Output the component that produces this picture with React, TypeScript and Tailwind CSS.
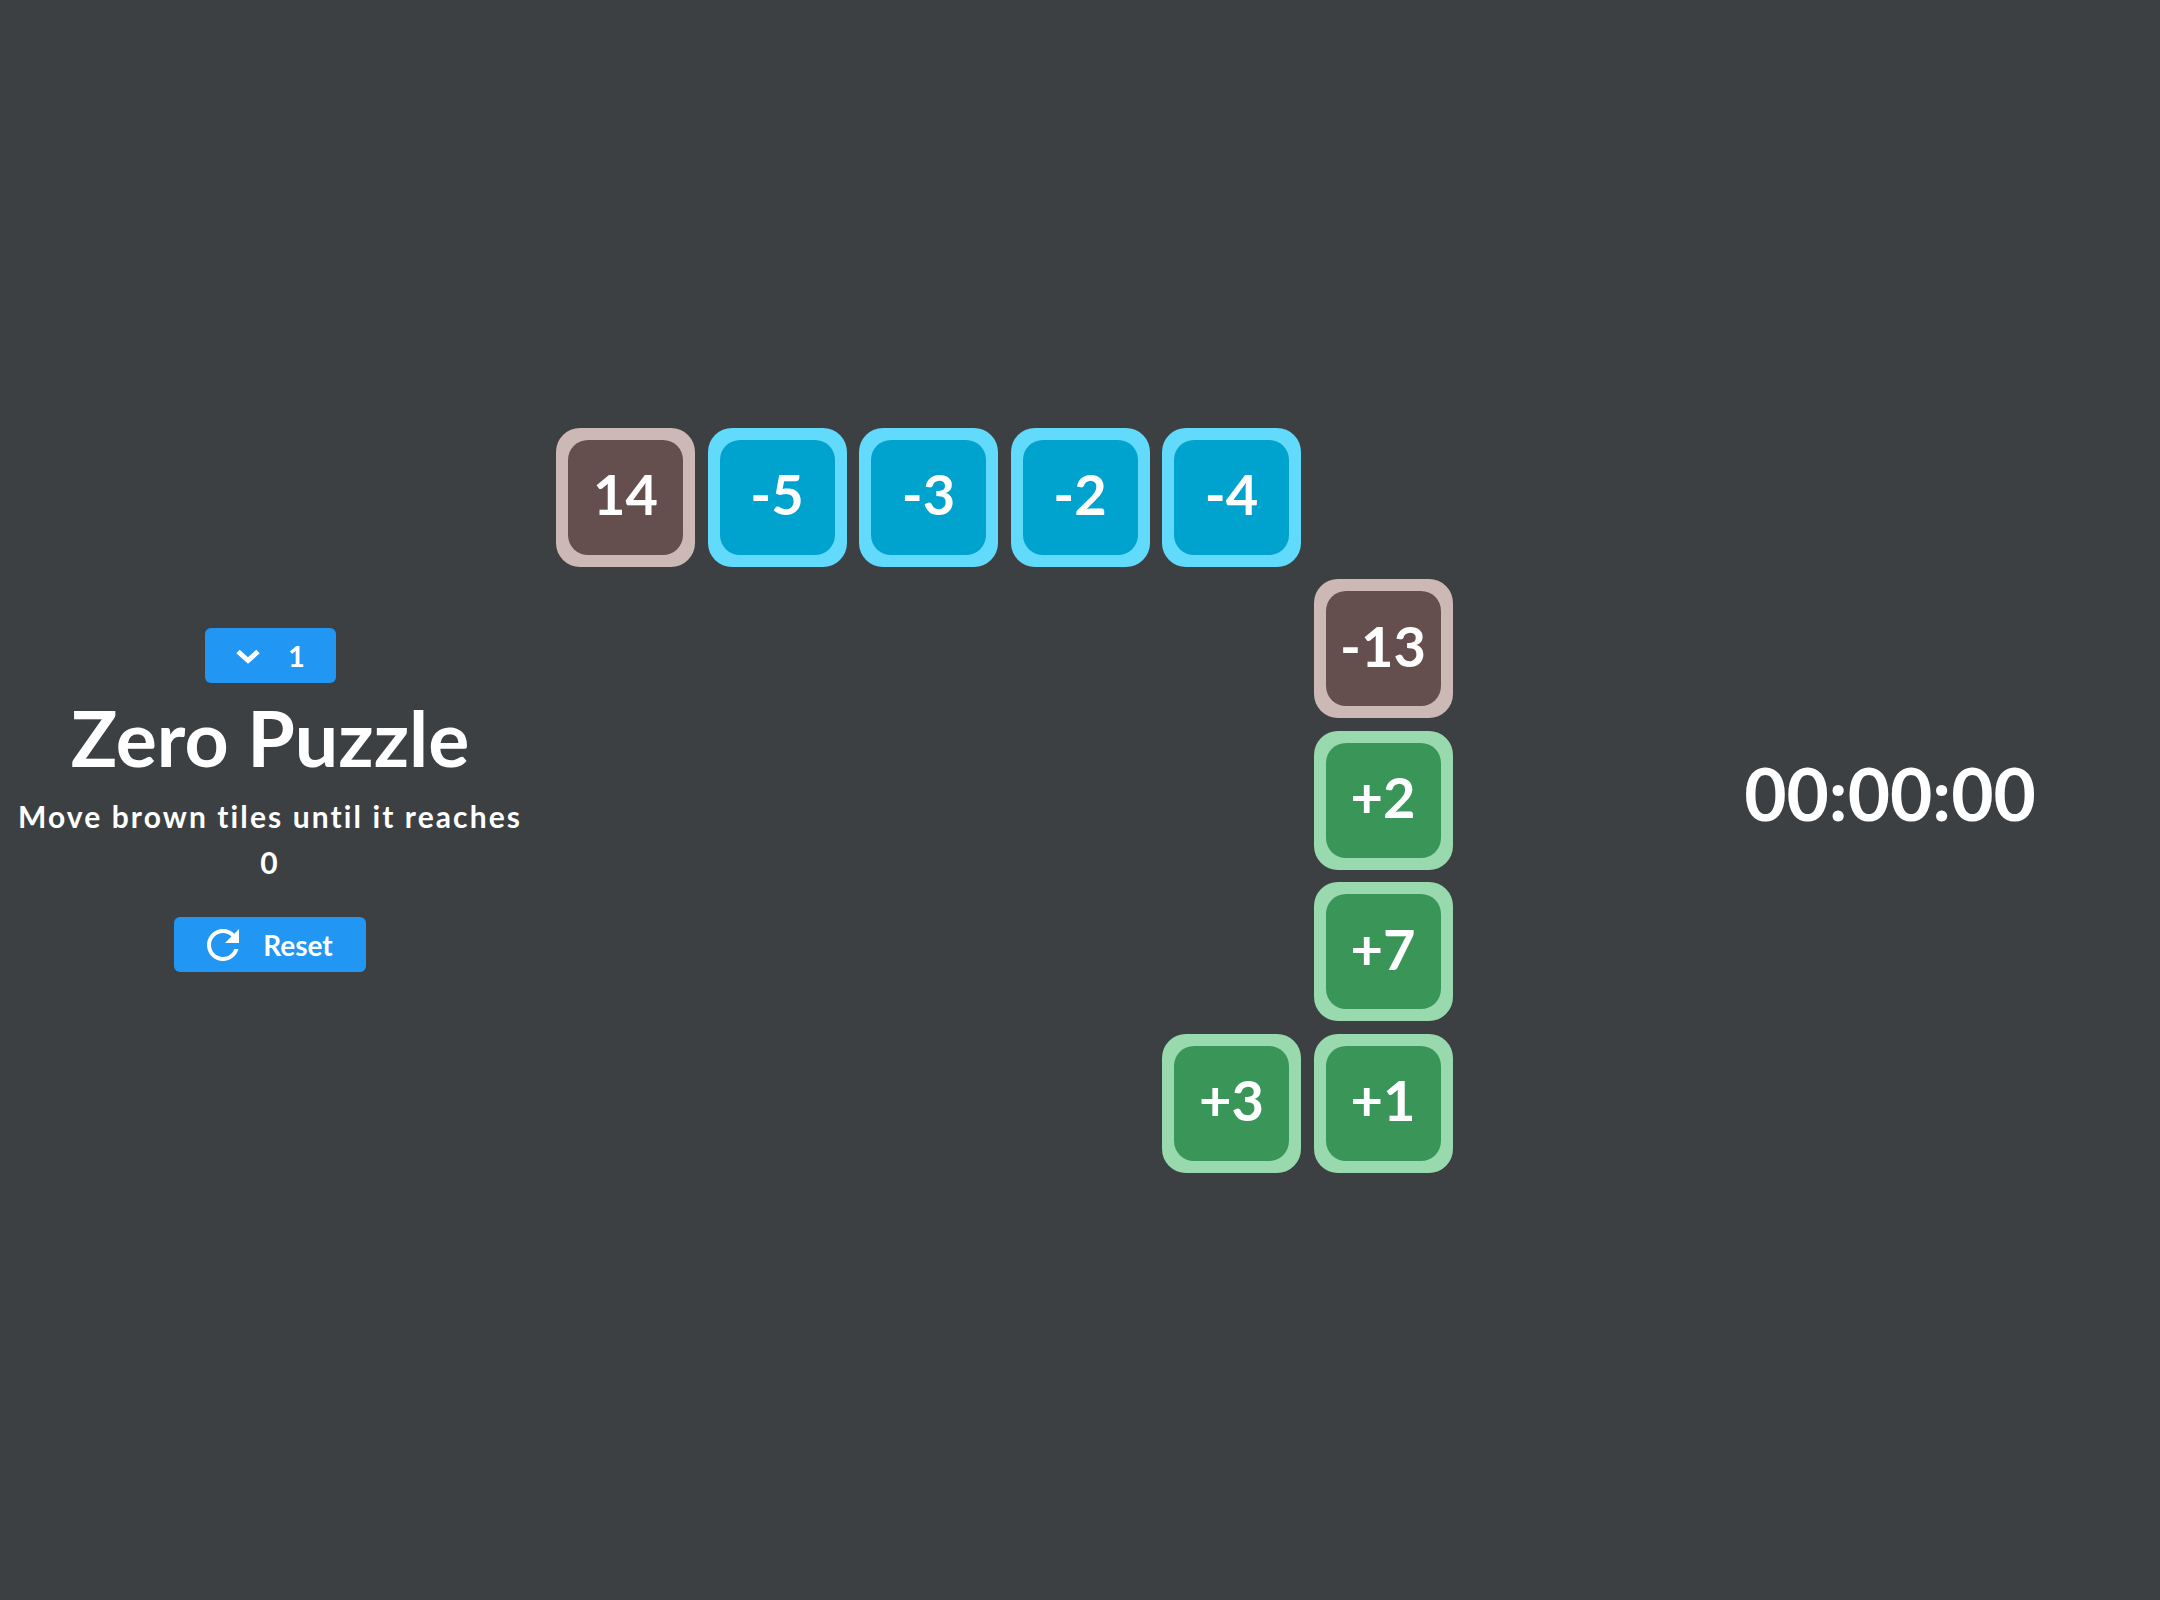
import { useState } from "react";

type Kind = "brown" | "blue" | "green";

interface Tile {
  value: string;
  kind: Kind;
  place: string;
}

const TILE_STYLES: Record<Kind, { outer: string; inner: string }> = {
  brown: { outer: "bg-[#ccb9b6]", inner: "bg-[#654f4e]" },
  blue: { outer: "bg-[#61dafb]", inner: "bg-[#00a2ce]" },
  green: { outer: "bg-[#98d9ae]", inner: "bg-[#3a9658]" },
};

const TILES: Tile[] = [
  { value: "14", kind: "brown", place: "col-start-1 row-start-1" },
  { value: "-5", kind: "blue", place: "col-start-2 row-start-1" },
  { value: "-3", kind: "blue", place: "col-start-3 row-start-1" },
  { value: "-2", kind: "blue", place: "col-start-4 row-start-1" },
  { value: "-4", kind: "blue", place: "col-start-5 row-start-1" },
  { value: "-13", kind: "brown", place: "col-start-6 row-start-2" },
  { value: "+2", kind: "green", place: "col-start-6 row-start-3" },
  { value: "+7", kind: "green", place: "col-start-6 row-start-4" },
  { value: "+3", kind: "green", place: "col-start-5 row-start-5" },
  { value: "+1", kind: "green", place: "col-start-6 row-start-5" },
];

function ChevronDown() {
  return (
    <svg width="26" height="16" viewBox="0 0 26 16" aria-hidden>
      <polyline
        points="3,3.5 13,12.5 23,3.5"
        fill="none"
        stroke="currentColor"
        strokeWidth="5"
        strokeLinejoin="miter"
      />
    </svg>
  );
}

function RefreshIcon() {
  return (
    <svg width="32" height="32" viewBox="4 4 16 16" fill="currentColor" aria-hidden>
      <path d="M17.65 6.35C16.2 4.9 14.21 4 12 4c-4.42 0-7.99 3.58-7.99 8s3.57 8 7.99 8c3.73 0 6.84-2.55 7.73-6h-2.08c-.82 2.33-3.04 4-5.65 4-3.31 0-6-2.69-6-6s2.69-6 6-6c1.66 0 3.14.69 4.22 1.78L13 11h7V4l-2.35 2.35z" />
    </svg>
  );
}

function TileBox({ tile }: { tile: Tile }) {
  const style = TILE_STYLES[tile.kind];
  return (
    <div className={`${tile.place} ${style.outer} rounded-[24px] p-[12px]`}>
      <div
        className={`${style.inner} flex h-full w-full items-center justify-center rounded-[20px] pb-[6px] text-[56px] font-bold leading-none`}
      >
        {tile.value}
      </div>
    </div>
  );
}

export default function App() {
  const [level] = useState(1);

  return (
    <div className="flex h-screen w-full items-center bg-[#3c4043] font-['Lato',sans-serif] text-white">
      <aside className="flex w-[540px] flex-col items-center px-[10px] text-center">
        <button
          type="button"
          className="flex h-[55px] w-[131px] items-center justify-center gap-[27px] rounded-[6px] bg-[#2196f3] text-[29px] font-bold"
        >
          <ChevronDown />
          <span className="leading-none">{level}</span>
        </button>
        <h1 className="mt-[16px] text-[77px] font-bold leading-none">Zero Puzzle</h1>
        <p className="mt-[17px] max-w-[515px] text-[30px] font-bold leading-[46px] tracking-[2.1px]">
          Move brown tiles until it reaches 0
        </p>
        <button
          type="button"
          className="mt-[32px] flex h-[55px] w-[192px] items-center justify-center gap-[24px] rounded-[6px] bg-[#2196f3] text-[28px] font-bold"
        >
          <RefreshIcon />
          <span className="leading-none">Reset</span>
        </button>
      </aside>

      <main className="flex flex-1 justify-center">
        <div className="grid grid-cols-[repeat(7,139px)] grid-rows-[repeat(5,139px)] gap-[12.5px]">
          {TILES.map((tile) => (
            <TileBox key={tile.value} tile={tile} />
          ))}
        </div>
      </main>

      <aside className="flex w-[540px] justify-center">
        <span className="mb-[14px] text-[73px] font-bold leading-none">00:00:00</span>
      </aside>
    </div>
  );
}
